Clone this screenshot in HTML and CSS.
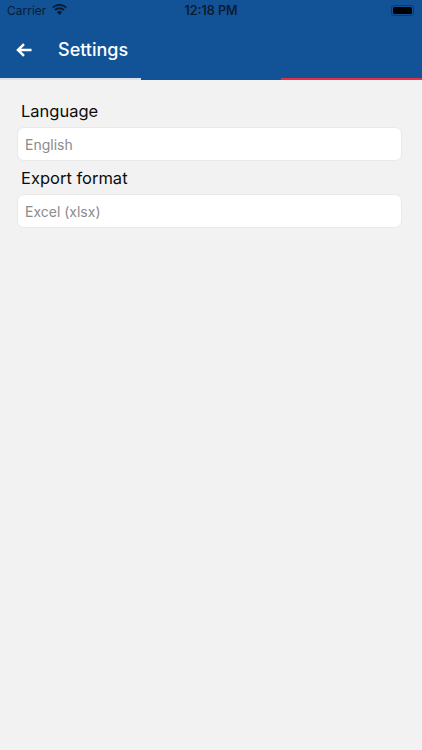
FILE: index.html
```html
<!DOCTYPE html>
<html lang="en">
<head>
<meta charset="utf-8">
<title>Settings</title>
<link rel="stylesheet" href="styles.css">
</head>
<body>
<header class="appbar">
  <div class="status">
    <div class="status-left">
      <span class="carrier">Carrier</span>
      <svg class="wifi" viewBox="0 0 16 12" width="15" height="11"><path d="M8 12 5.2 8.9a3.9 3.9 0 0 1 5.6 0z" fill="#0a1c33"/><path d="M3.8 7.4a6 6 0 0 1 8.4 0l1.5-1.6a8.1 8.1 0 0 0-11.4 0z" fill="#0a1c33"/><path d="M1.2 4.6a9.7 9.7 0 0 1 13.6 0L16 3.2a11.4 11.4 0 0 0-16 0z" fill="#0a1c33"/></svg>
    </div>
    <span class="time">12:18 PM</span>
    <div class="battery"><span class="battery-fill"></span></div>
  </div>
  <div class="nav">
    <svg class="back" viewBox="0 0 16 14" width="16" height="14"><path d="M15.5 7H2.5M8 1.2 2 7l6 5.8" fill="none" stroke="#fff" stroke-width="2.5"/></svg>
    <span class="title">Settings</span>
  </div>
  <div class="stripe">
    <span class="seg seg-light"></span>
    <span class="seg seg-blue"></span>
    <span class="seg seg-red"></span>
  </div>
</header>
<main class="content">
  <label class="label">Language</label>
  <div class="field">English</div>
  <label class="label">Export format</label>
  <div class="field">Excel (xlsx)</div>
</main>
</body>
</html>
```
FILE: styles.css
```css
* { box-sizing: border-box; }
html, body { margin: 0; height: 100%; }
body {
  width: 422px;
  height: 750px;
  overflow: hidden;
  background: #f2f2f2;
  font-family: Inter, "Liberation Sans", sans-serif;
}
.appbar { background: #125397; height: 80px; display: flex; flex-direction: column; }
.status {
  height: 21px;
  padding: 0 8px 0 7px;
  display: flex;
  align-items: center;
  justify-content: space-between;
  position: relative;
  color: #0a1c33;
}
.status-left { display: flex; align-items: center; gap: 6px; }
.carrier { font-size: 12px; }
.wifi { margin-top: -3px; }
.time {
  position: absolute;
  left: 0;
  right: 0;
  text-align: center;
  font-size: 12.5px;
  font-weight: 600;
}
.battery {
  width: 23px;
  height: 11px;
  border: 1px solid #0c3a6c;
  border-radius: 3px;
  padding: 1px;
  margin-top: -1px;
}
.battery-fill { display: block; height: 100%; background: #000; border-radius: 1.5px; }
.nav { flex: 1; display: flex; align-items: center; padding: 0 0 0 16px; }
.back { flex: none; }
.title { margin-left: 26px; color: #fff; font-size: 18px; font-weight: 500; }
.stripe { display: flex; height: 2px; }
.seg { flex: 1; display: block; }
.seg-light { background: #d9e2ec; }
.seg-blue { background: #125397; }
.seg-red { background: #e0304a; }
.content { padding: 19px 20.5px 0 17px; display: flex; flex-direction: column; }
.label {
  font-size: 16.5px;
  line-height: 24px;
  padding-left: 4px;
  color: #0c0c0c;
  height: 28px;
}
.field {
  height: 34px;
  margin-bottom: 5px;
  background: #fff;
  border: 1px solid #e9e9e9;
  border-radius: 7px;
  padding-left: 7px;
  display: flex;
  align-items: center;
  font-size: 14px;
  color: #8b8b8b;
}
```
